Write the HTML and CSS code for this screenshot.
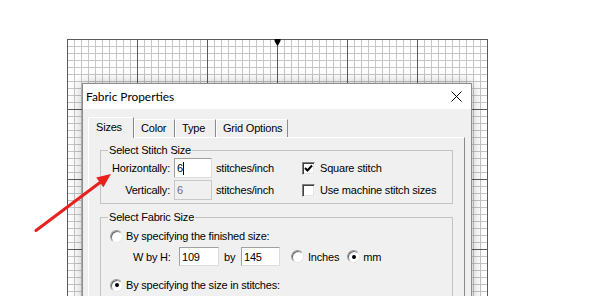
FILE: index.html
```html
<!DOCTYPE html>
<html>
<head>
<meta charset="utf-8">
<link rel="stylesheet" href="styles.css">
</head>
<body>
<div class="stage">
  <div class="grid">
    <svg class="marker" width="7" height="7" viewBox="0 0 7 7"><polygon points="0.5,0 6.5,0 6.5,2 4,6.5 3,6.5 0.5,2" fill="#000"/></svg>
  </div>

  <div class="dialog">
    <div class="titlebar">
      <span class="title">Fabric Properties</span>
      <svg class="close" width="11" height="11" viewBox="0 0 11 11"><path d="M0.5 0.5 L10.5 10.5 M10.5 0.5 L0.5 10.5" stroke="#000" stroke-width="1"/></svg>
    </div>
    <div class="body">
      <div class="tabs">
        <div class="tab active tab-sizes">Sizes</div>
        <div class="tab tab-color">Color</div>
        <div class="tab tab-type">Type</div>
        <div class="tab tab-grid">Grid Options</div>
      </div>
      <div class="panel">
        <div class="group g1">
          <span class="legend">Select Stitch Size</span>
          <div class="row">
            <span class="lbl">Horizontally:</span>
            <span class="field w38"><span class="caret">6</span></span>
            <span class="unit">stitches/inch</span>
            <span class="check checked"><svg width="11" height="11" viewBox="0 0 11 11"><path d="M2 5 L4.5 7.5 L9 2.5" fill="none" stroke="#000" stroke-width="2"/></svg></span>
            <span class="check-label">Square stitch</span>
          </div>
          <div class="row">
            <span class="lbl">Vertically:</span>
            <span class="field w38 disabled">6</span>
            <span class="unit">stitches/inch</span>
            <span class="check"></span>
            <span class="check-label">Use machine stitch sizes</span>
          </div>
        </div>

        <div class="group g2">
          <span class="legend">Select Fabric Size</span>
          <div class="row opt">
            <span class="radio"></span>
            <span class="radio-label">By specifying the finished size:</span>
          </div>
          <div class="row dims">
            <span class="dim-lbl">W by H:</span>
            <span class="field w40">109</span>
            <span class="by">by</span>
            <span class="field w39">145</span>
            <span class="radio r-inches"></span>
            <span class="unit-label">Inches</span>
            <span class="radio checked r-mm"></span>
            <span class="unit-label mm">mm</span>
          </div>
          <div class="row opt opt2">
            <span class="radio checked"></span>
            <span class="radio-label">By specifying the size in stitches:</span>
          </div>
        </div>
      </div>
    </div>
  </div>

  <svg class="annot" width="592" height="296" viewBox="0 0 592 296">
    <line x1="36" y1="230.5" x2="102" y2="181" stroke="#e8211f" stroke-width="3" stroke-linecap="round"/>
    <polygon points="111,174 103.4,187.2 96.2,177.6" fill="#e8211f"/>
  </svg>
</div>
</body>
</html>
```

FILE: styles.css
```css
html, body {
  margin: 0;
  padding: 0;
  background: #fff;
}

body {
  font-family: "Liberation Sans", Arial, sans-serif;
  font-size: 11px;
  letter-spacing: -0.2px;
  color: #000;
}

.stage {
  position: relative;
  width: 592px;
  height: 296px;
  overflow: hidden;
  padding-top: 39px;
  box-sizing: border-box;
}

.grid {
  position: relative;
  margin-left: 67px;
  width: 421px;
  height: 260px;
  background-color: #fff;
  background-image:
    linear-gradient(to right, #5a5a5a 1px, transparent 1px),
    linear-gradient(to bottom, #5a5a5a 1px, transparent 1px),
    linear-gradient(to right, #c6c6c6 1px, transparent 1px),
    linear-gradient(to bottom, #c6c6c6 1px, transparent 1px);
  background-size: 70px 70px, 70px 70px, 7px 7px, 7px 7px;
}

.marker {
  position: absolute;
  left: 207px;
  top: 0;
  display: block;
}

/* dialog window */
.dialog {
  position: absolute;
  left: 82px;
  top: 83px;
  width: 390px;
  height: 240px;
  box-sizing: border-box;
  border: 1px solid #8c8c8c;
  background: #f0f0f0;
  box-shadow: 0 0 12px rgba(0, 0, 0, 0.28);
}

.titlebar {
  height: 25px;
  background: #fff;
  display: flex;
  align-items: center;
  justify-content: space-between;
  padding-left: 3px;
  padding-right: 9px;
}

.title {
  font-family: Lato, "Liberation Sans", sans-serif;
  font-size: 11.9px;
  letter-spacing: 0;
}

.close {
  display: block;
}

.body {
  padding-top: 8px;
  padding-left: 5px;
}

/* tabs */
.tabs {
  display: flex;
  align-items: flex-end;
  height: 20px;
}

.tab {
  box-sizing: border-box;
  height: 18px;
  padding-left: 6px;
  line-height: 17px;
  background: #f0f0f0;
  border-top: 1px solid #fff;
  border-left: 1px solid #fff;
  border-right: 1px solid #8a8a8a;
  white-space: nowrap;
}

.tab.active {
  height: 21px;
  margin-bottom: -1px;
  position: relative;
  z-index: 1;
  line-height: 18px;
  padding-left: 7px;
}

.tab-sizes { width: 46px; }
.tab-color { width: 41px; }
.tab-type { width: 41px; }
.tab-grid { width: 72px; }

.panel {
  box-sizing: border-box;
  width: 377px;
  height: 200px;
  border-top: 1px solid #fff;
  border-left: 1px solid #fff;
  border-right: 1px solid #8a8a8a;
  padding-left: 11px;
  padding-top: 12px;
}

/* group boxes */
.group {
  position: relative;
  box-sizing: border-box;
  width: 353px;
  border: 1px solid #c4c4c4;
}

.legend {
  position: absolute;
  left: 7px;
  top: -8px;
  padding: 0 1px;
  background: #f0f0f0;
  line-height: 14px;
}

.g1 {
  height: 54px;
  padding-top: 7px;
}

.g1 .row + .row {
  margin-top: 2px;
}

.g2 {
  margin-top: 13px;
  height: 120px;
  padding-top: 11px;
  padding-left: 9px;
}

.row {
  display: flex;
  align-items: center;
  height: 20px;
  white-space: nowrap;
}

.lbl {
  width: 69px;
  margin-right: 4px;
  text-align: right;
}

.field {
  box-sizing: border-box;
  height: 20px;
  padding-left: 2px;
  background: #fff;
  border: 1px solid;
  border-color: #a0a0a0 #dcdcdc #dcdcdc #a0a0a0;
  display: flex;
  align-items: center;
}

.field.disabled {
  background: #f0f0f0;
  color: #6d6d6d;
  border-color: #c8c8c8;
}

.w38 { width: 38px; }
.w40 { width: 40px; }
.w39 { width: 39px; }

.caret {
  border-right: 1px solid #000;
  line-height: 13px;
}

.unit {
  width: 86px;
  margin-left: 4px;
}

.check {
  box-sizing: border-box;
  width: 13px;
  height: 13px;
  background: #fff;
  border: 1px solid;
  border-color: #808080 #f4f4f4 #f4f4f4 #808080;
  box-shadow: inset 1px 1px 0 #404040, inset -1px -1px 0 #e3e3e3;
  display: flex;
  align-items: center;
  justify-content: center;
}

.check svg {
  display: block;
}

.check-label {
  margin-left: 5px;
}

/* radios */
.radio {
  position: relative;
  box-sizing: border-box;
  width: 13px;
  height: 13px;
  flex: none;
  border-radius: 50%;
  background: #fff;
  border: 1px solid;
  border-color: #9a9a9a #e6e6e6 #e6e6e6 #9a9a9a;
  box-shadow: inset 1px 1px 0 #6a6a6a;
}

.radio.checked::after {
  content: "";
  position: absolute;
  left: 3.5px;
  top: 3.5px;
  width: 4px;
  height: 4px;
  border-radius: 50%;
  background: #000;
}

.radio-label {
  margin-left: 3px;
}

.opt {
  height: 14px;
}

.dims {
  margin-top: 4px;
  height: 19px;
}

.dims .field {
  height: 19px;
}

.opt2 {
  margin-top: 12px;
}

.dim-lbl {
  width: 46px;
  margin-left: 23px;
}

.by {
  width: 22px;
  box-sizing: border-box;
  padding-left: 5px;
}

.r-inches {
  margin-left: 11px;
}

.unit-label {
  margin-left: 4px;
}

.r-mm {
  margin-left: 8px;
}

.unit-label.mm {
  margin-left: 3px;
}

/* annotation arrow */
.annot {
  position: absolute;
  left: 0;
  top: 0;
  pointer-events: none;
}
```
